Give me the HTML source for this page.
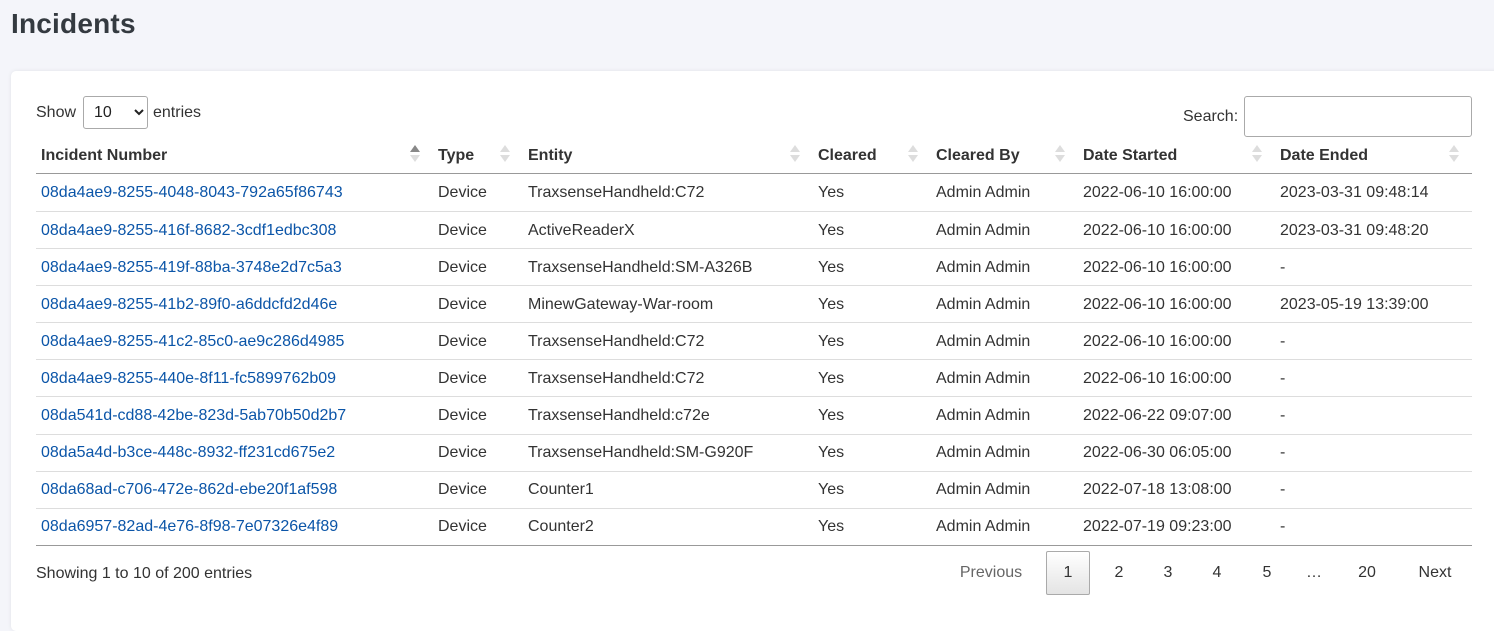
<!DOCTYPE html>
<html><head><style>
body{margin:0;width:1494px;height:616px;background:#f4f5fa;font-family:"Liberation Sans",Arial,sans-serif;color:#333;overflow:hidden;position:relative}
h1{position:absolute;left:11px;top:8px;margin:0;font-size:28px;font-weight:bold;color:#343a40;letter-spacing:0.2px}
.card{position:absolute;left:11px;top:71px;width:1500px;height:560px;background:#fff;border-radius:5px;box-shadow:0 0 4px rgba(0,0,0,.08)}
.abs{position:absolute;font-size:16px;color:#333}
select{position:absolute;left:83px;top:96px;width:65px;height:33px;border:1px solid #aaa;border-radius:3px;background:#fff;font-size:16px;padding:0 0 0 6px;font-family:inherit;color:#222}
.search{position:absolute;left:1244px;top:96px;width:226px;height:39px;border:1px solid #aaa;border-radius:3px}
table{position:absolute;left:36px;top:136px;width:1436px;border-collapse:collapse;font-size:16px}
th{text-align:left;height:35px;padding:2px 5px 0;font-weight:bold;color:#333;border-bottom:1px solid #999;position:relative;vertical-align:middle}
td{height:35.1px;padding:1px 5px 0;border-top:1px solid #ddd;color:#333}
tr:first-child td{border-top:none;height:36px}
td a{color:#0b55a8;text-decoration:none}
tbody tr:last-child td{border-bottom:1px solid #999}
.s{position:absolute;right:18px;top:9px;width:0}
.s:before,.s:after{content:"";position:absolute;border-left:5px solid transparent;border-right:5px solid transparent;left:-5px}
.s:before{border-bottom:7px solid #ddd;top:0}
.s:after{border-top:7px solid #ddd;top:10px}
.s.a:before{border-bottom-color:#888}
.pg{position:absolute;top:551px;height:44px;line-height:44px;font-size:16px;color:#333;text-align:center}
</style></head><body>
<h1>Incidents</h1>
<div class="card"></div>
<div class="abs" style="left:36px;top:104px">Show</div>
<select><option>10</option></select>
<div class="abs" style="left:153px;top:104px">entries</div>
<div class="abs" style="left:1183px;top:108px">Search:</div>
<div class="search"></div>
<table>
<colgroup><col style="width:397px"><col style="width:90px"><col style="width:290px"><col style="width:118px"><col style="width:147px"><col style="width:197px"><col></colgroup>
<thead><tr><th>Incident Number<span class="s a"></span></th><th>Type<span class="s"></span></th><th>Entity<span class="s"></span></th><th>Cleared<span class="s"></span></th><th>Cleared By<span class="s"></span></th><th>Date Started<span class="s"></span></th><th>Date Ended<span class="s"></span></th></tr></thead>
<tbody>
<tr><td><a>08da4ae9-8255-4048-8043-792a65f86743</a></td><td>Device</td><td>TraxsenseHandheld:C72</td><td>Yes</td><td>Admin Admin</td><td>2022-06-10 16:00:00</td><td>2023-03-31 09:48:14</td></tr>
<tr><td><a>08da4ae9-8255-416f-8682-3cdf1edbc308</a></td><td>Device</td><td>ActiveReaderX</td><td>Yes</td><td>Admin Admin</td><td>2022-06-10 16:00:00</td><td>2023-03-31 09:48:20</td></tr>
<tr><td><a>08da4ae9-8255-419f-88ba-3748e2d7c5a3</a></td><td>Device</td><td>TraxsenseHandheld:SM-A326B</td><td>Yes</td><td>Admin Admin</td><td>2022-06-10 16:00:00</td><td>-</td></tr>
<tr><td><a>08da4ae9-8255-41b2-89f0-a6ddcfd2d46e</a></td><td>Device</td><td>MinewGateway-War-room</td><td>Yes</td><td>Admin Admin</td><td>2022-06-10 16:00:00</td><td>2023-05-19 13:39:00</td></tr>
<tr><td><a>08da4ae9-8255-41c2-85c0-ae9c286d4985</a></td><td>Device</td><td>TraxsenseHandheld:C72</td><td>Yes</td><td>Admin Admin</td><td>2022-06-10 16:00:00</td><td>-</td></tr>
<tr><td><a>08da4ae9-8255-440e-8f11-fc5899762b09</a></td><td>Device</td><td>TraxsenseHandheld:C72</td><td>Yes</td><td>Admin Admin</td><td>2022-06-10 16:00:00</td><td>-</td></tr>
<tr><td><a>08da541d-cd88-42be-823d-5ab70b50d2b7</a></td><td>Device</td><td>TraxsenseHandheld:c72e</td><td>Yes</td><td>Admin Admin</td><td>2022-06-22 09:07:00</td><td>-</td></tr>
<tr><td><a>08da5a4d-b3ce-448c-8932-ff231cd675e2</a></td><td>Device</td><td>TraxsenseHandheld:SM-G920F</td><td>Yes</td><td>Admin Admin</td><td>2022-06-30 06:05:00</td><td>-</td></tr>
<tr><td><a>08da68ad-c706-472e-862d-ebe20f1af598</a></td><td>Device</td><td>Counter1</td><td>Yes</td><td>Admin Admin</td><td>2022-07-18 13:08:00</td><td>-</td></tr>
<tr><td><a>08da6957-82ad-4e76-8f98-7e07326e4f89</a></td><td>Device</td><td>Counter2</td><td>Yes</td><td>Admin Admin</td><td>2022-07-19 09:23:00</td><td>-</td></tr>
</tbody></table>
<div class="abs" style="left:36px;top:565px">Showing 1 to 10 of 200 entries</div>
<div class="pg" style="left:950px;width:82px;color:#666">Previous</div>
<div class="pg" style="left:1046px;width:44px;height:44px;border:1px solid #aaa;border-radius:2px;background:linear-gradient(#fff,#e4e4e4);box-sizing:border-box;line-height:42px">1</div>
<div class="pg" style="left:1097px;width:44px">2</div>
<div class="pg" style="left:1146px;width:44px">3</div>
<div class="pg" style="left:1195px;width:44px">4</div>
<div class="pg" style="left:1245px;width:44px">5</div>
<div class="pg" style="left:1299px;width:30px">…</div>
<div class="pg" style="left:1345px;width:44px">20</div>
<div class="pg" style="left:1405px;width:60px">Next</div>
</body></html>
